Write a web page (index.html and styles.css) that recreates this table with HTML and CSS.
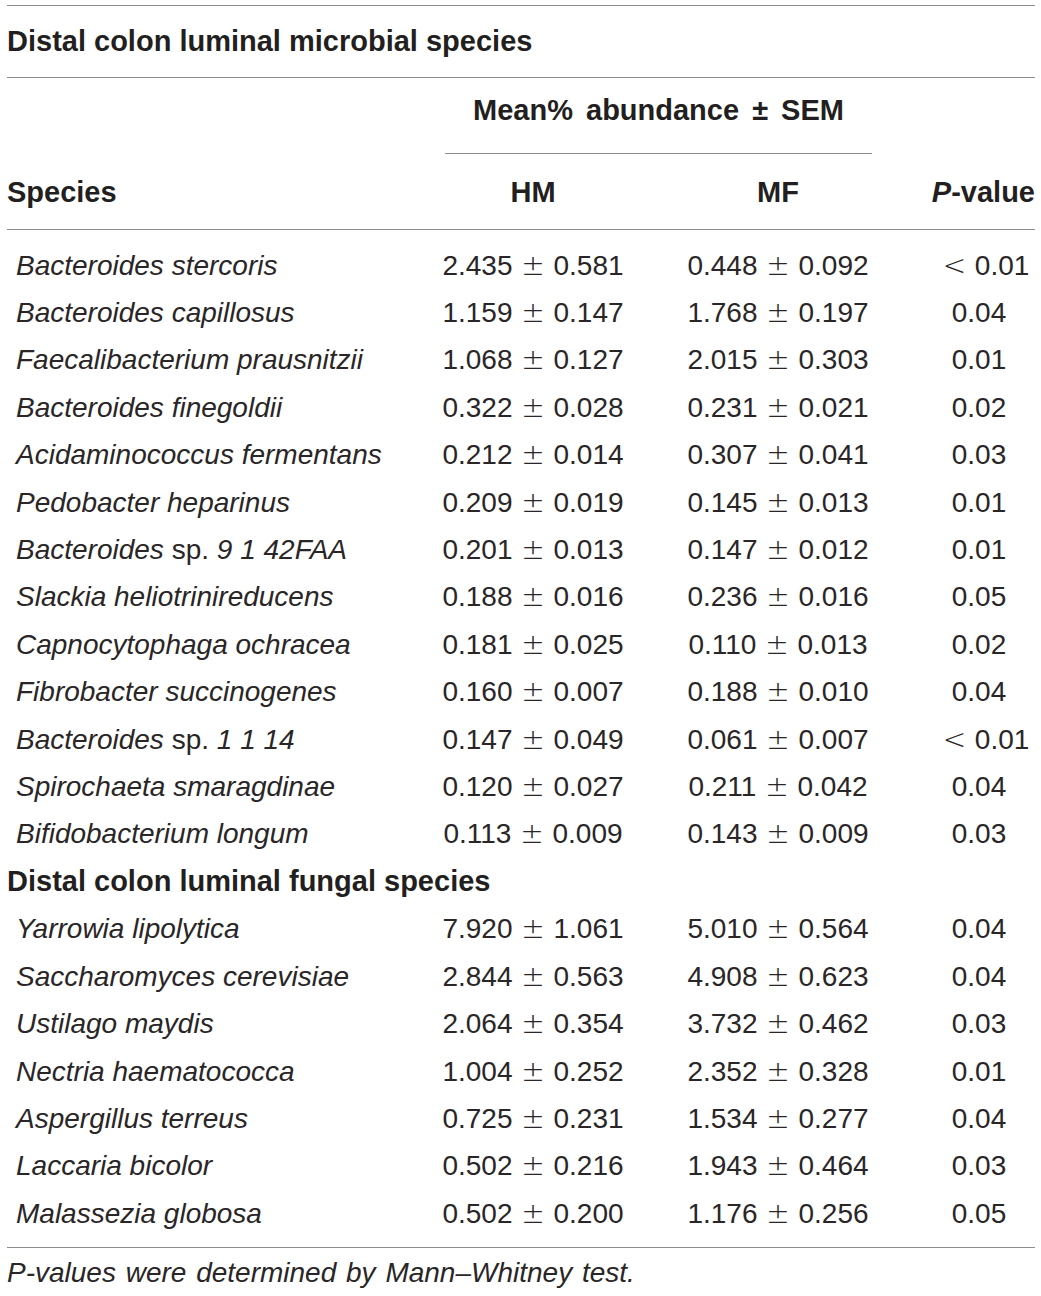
FILE: index.html
```html
<!DOCTYPE html>
<html lang="en">
<head>
<meta charset="utf-8">
<title>Distal colon luminal species</title>
<link rel="stylesheet" href="styles.css">
</head>
<body>
<div class="wrap">
<table class="tbl">
  <colgroup>
    <col class="c-species">
    <col class="c-hm">
    <col class="c-mf">
    <col class="c-p">
  </colgroup>
  <thead>
    <tr class="title-row">
      <th colspan="4" class="title">Distal colon luminal microbial species</th>
    </tr>
    <tr class="h1">
      <th rowspan="2" class="h-species">Species</th>
      <th colspan="2" class="h-mean"><span class="mean-rule">Mean% abundance ± SEM</span></th>
      <th rowspan="2" class="h-p"><i>P</i>-value</th>
    </tr>
    <tr class="h2">
      <th class="h-col">HM</th>
      <th class="h-col">MF</th>
    </tr>
  </thead>
  <tbody>
    <tr class="first"><td class="sp"><i>Bacteroides stercoris</i></td><td>2.435 <span class="pm">±</span> 0.581</td><td>0.448 <span class="pm">±</span> 0.092</td><td class="lt"><span class="pm">&lt;</span> 0.01</td></tr>
    <tr><td class="sp"><i>Bacteroides capillosus</i></td><td>1.159 <span class="pm">±</span> 0.147</td><td>1.768 <span class="pm">±</span> 0.197</td><td>0.04</td></tr>
    <tr><td class="sp"><i>Faecalibacterium prausnitzii</i></td><td>1.068 <span class="pm">±</span> 0.127</td><td>2.015 <span class="pm">±</span> 0.303</td><td>0.01</td></tr>
    <tr><td class="sp"><i>Bacteroides finegoldii</i></td><td>0.322 <span class="pm">±</span> 0.028</td><td>0.231 <span class="pm">±</span> 0.021</td><td>0.02</td></tr>
    <tr><td class="sp"><i>Acidaminococcus fermentans</i></td><td>0.212 <span class="pm">±</span> 0.014</td><td>0.307 <span class="pm">±</span> 0.041</td><td>0.03</td></tr>
    <tr><td class="sp"><i>Pedobacter heparinus</i></td><td>0.209 <span class="pm">±</span> 0.019</td><td>0.145 <span class="pm">±</span> 0.013</td><td>0.01</td></tr>
    <tr><td class="sp"><i>Bacteroides</i> sp. <i>9 1 42FAA</i></td><td>0.201 <span class="pm">±</span> 0.013</td><td>0.147 <span class="pm">±</span> 0.012</td><td>0.01</td></tr>
    <tr><td class="sp"><i>Slackia heliotrinireducens</i></td><td>0.188 <span class="pm">±</span> 0.016</td><td>0.236 <span class="pm">±</span> 0.016</td><td>0.05</td></tr>
    <tr><td class="sp"><i>Capnocytophaga ochracea</i></td><td>0.181 <span class="pm">±</span> 0.025</td><td>0.110 <span class="pm">±</span> 0.013</td><td>0.02</td></tr>
    <tr><td class="sp"><i>Fibrobacter succinogenes</i></td><td>0.160 <span class="pm">±</span> 0.007</td><td>0.188 <span class="pm">±</span> 0.010</td><td>0.04</td></tr>
    <tr><td class="sp"><i>Bacteroides</i> sp. <i>1 1 14</i></td><td>0.147 <span class="pm">±</span> 0.049</td><td>0.061 <span class="pm">±</span> 0.007</td><td class="lt"><span class="pm">&lt;</span> 0.01</td></tr>
    <tr><td class="sp"><i>Spirochaeta smaragdinae</i></td><td>0.120 <span class="pm">±</span> 0.027</td><td>0.211 <span class="pm">±</span> 0.042</td><td>0.04</td></tr>
    <tr><td class="sp"><i>Bifidobacterium longum</i></td><td>0.113 <span class="pm">±</span> 0.009</td><td>0.143 <span class="pm">±</span> 0.009</td><td>0.03</td></tr>
    <tr><td colspan="4" class="section">Distal colon luminal fungal species</td></tr>
    <tr><td class="sp"><i>Yarrowia lipolytica</i></td><td>7.920 <span class="pm">±</span> 1.061</td><td>5.010 <span class="pm">±</span> 0.564</td><td>0.04</td></tr>
    <tr><td class="sp"><i>Saccharomyces cerevisiae</i></td><td>2.844 <span class="pm">±</span> 0.563</td><td>4.908 <span class="pm">±</span> 0.623</td><td>0.04</td></tr>
    <tr><td class="sp"><i>Ustilago maydis</i></td><td>2.064 <span class="pm">±</span> 0.354</td><td>3.732 <span class="pm">±</span> 0.462</td><td>0.03</td></tr>
    <tr><td class="sp"><i>Nectria haematococca</i></td><td>1.004 <span class="pm">±</span> 0.252</td><td>2.352 <span class="pm">±</span> 0.328</td><td>0.01</td></tr>
    <tr><td class="sp"><i>Aspergillus terreus</i></td><td>0.725 <span class="pm">±</span> 0.231</td><td>1.534 <span class="pm">±</span> 0.277</td><td>0.04</td></tr>
    <tr><td class="sp"><i>Laccaria bicolor</i></td><td>0.502 <span class="pm">±</span> 0.216</td><td>1.943 <span class="pm">±</span> 0.464</td><td>0.03</td></tr>
    <tr class="last"><td class="sp"><i>Malassezia globosa</i></td><td>0.502 <span class="pm">±</span> 0.200</td><td>1.176 <span class="pm">±</span> 0.256</td><td>0.05</td></tr>
  </tbody>
</table>
<p class="note"><i>P-values were determined by Mann–Whitney test.</i></p>
</div>
</body>
</html>
```

FILE: styles.css
```css
html, body {
  margin: 0;
  padding: 0;
  background: #ffffff;
}

body {
  font-family: "Liberation Sans", Arial, Helvetica, sans-serif;
  color: #231f20;
}

.wrap {
  padding: 5px 6px 0 7px;
}

.tbl {
  width: 1028px;
  border-collapse: separate;
  border-spacing: 0;
  table-layout: fixed;
  font-size: 28px;
}

.c-species { width: 426px; }
.c-hm { width: 200px; }
.c-mf { width: 290px; }
.c-p { width: 112px; }

.tbl th {
  padding: 0;
  font-weight: bold;
}

.title {
  text-align: left;
  font-size: 29px;
  line-height: 71px;
  border-top: 1px solid #8c8c8c;
  border-bottom: 1px solid #8c8c8c;
}

.h1 th,
.h2 th {
  font-size: 29px;
}

.h-species {
  text-align: left;
  vertical-align: bottom;
  line-height: 74px;
  border-bottom: 1px solid #8c8c8c;
}

.h-p {
  text-align: right;
  vertical-align: bottom;
  line-height: 74px;
  border-bottom: 1px solid #8c8c8c;
}

.h-mean {
  line-height: 0;
  padding: 0;
  vertical-align: top;
  text-align: left;
}

.mean-rule {
  display: block;
  margin-left: 12px;
  width: 427px;
  text-align: center;
  word-spacing: 5px;
  line-height: 65px;
  padding-bottom: 10px;
  border-bottom: 1px solid #8c8c8c;
}

.h-col {
  text-align: center;
  padding-top: 1px !important;
  line-height: 74px;
  border-bottom: 1px solid #8c8c8c;
}

.tbl td {
  padding: 0;
  line-height: 47.4px;
  text-align: center;
  white-space: nowrap;
  font-weight: normal;
  word-spacing: 1px;
  color: #2a2627;
}

.pm {
  font-family: "DejaVu Sans", sans-serif;
  font-weight: 200;
}

.tbl td.lt {
  padding-left: 14px;
}

.tbl td.sp {
  text-align: left;
  padding-left: 9px;
  word-spacing: 0;
}

.tbl td.section {
  text-align: left;
  font-weight: bold;
  font-size: 29px;
  word-spacing: 0;
  color: #231f20;
}

.tbl tr.first td {
  padding-top: 11.6px;
}

.tbl tr.last td {
  padding-bottom: 10px;
  border-bottom: 1px solid #8c8c8c;
}

.note {
  margin: 0;
  font-size: 28px;
  line-height: 50px;
  word-spacing: 2px;
  color: #2a2627;
}
```
